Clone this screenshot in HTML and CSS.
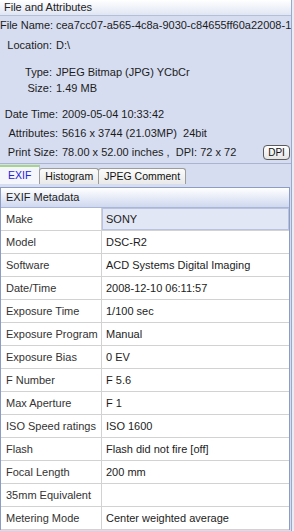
FILE: index.html
```html
<!DOCTYPE html>
<html lang="en">

<head>
    <meta charset="UTF-8">
    <meta name="viewport" content="width=device-width, initial-scale=1.0">
    <title>File and Attributes</title>
    <link rel="stylesheet" href="styles.css">
</head>

<body>
    <div class="window">
        <div class="title">File and Attributes</div>

        <div class="attrs attrs-top">
            <span class="lbl">File Name:</span>
            <span class="val nowrap">cea7cc07-a565-4c8a-9030-c84655ff60a22008-1</span>
            <span class="lbl">Location:</span>
            <span class="val">D:\</span>
            <span class="lbl">Type:</span>
            <span class="val">JPEG Bitmap (JPG) YCbCr</span>
            <span class="lbl">Size:</span>
            <span class="val">1.49 MB</span>
        </div>

        <div class="attrs attrs-bottom">
            <span class="lbl">Date Time:</span>
            <span class="val">2009-05-04 10:33:42</span>
            <span class="lbl">Attributes:</span>
            <span class="val">5616 x 3744 (21.03MP)&nbsp; 24bit</span>
            <span class="lbl">Print Size:</span>
            <span class="val print">
                <span>78.00 x 52.00 inches ,&nbsp; DPI: 72 x 72</span>
                <button class="dpi">DPI</button>
            </span>
        </div>

        <div class="tabs">
            <div class="tab active">EXIF</div>
            <div class="tab">Histogram</div>
            <div class="tab">JPEG Comment</div>
        </div>

        <div class="meta">
            <div class="meta-head">EXIF Metadata</div>
            <div class="row"><div class="k">Make</div><div class="v sel">SONY</div></div>
            <div class="row"><div class="k">Model</div><div class="v">DSC-R2</div></div>
            <div class="row"><div class="k">Software</div><div class="v">ACD Systems Digital Imaging</div></div>
            <div class="row"><div class="k">Date/Time</div><div class="v">2008-12-10 06:11:57</div></div>
            <div class="row"><div class="k">Exposure Time</div><div class="v">1/100 sec</div></div>
            <div class="row"><div class="k">Exposure Program</div><div class="v">Manual</div></div>
            <div class="row"><div class="k">Exposure Bias</div><div class="v">0 EV</div></div>
            <div class="row"><div class="k">F Number</div><div class="v">F 5.6</div></div>
            <div class="row"><div class="k">Max Aperture</div><div class="v">F 1</div></div>
            <div class="row"><div class="k">ISO Speed ratings</div><div class="v">ISO 1600</div></div>
            <div class="row"><div class="k">Flash</div><div class="v">Flash did not fire [off]</div></div>
            <div class="row"><div class="k">Focal Length</div><div class="v">200 mm</div></div>
            <div class="row"><div class="k">35mm Equivalent</div><div class="v"></div></div>
            <div class="row"><div class="k">Metering Mode</div><div class="v">Center weighted average</div></div>
        </div>
    </div>
</body>

</html>
```

FILE: styles.css
```css
body {
    margin: 0;
    width: 294px;
    height: 531px;
    overflow: hidden;
    background: #e8ecf6;
    font-family: "Liberation Sans", Arial, sans-serif;
    font-size: 11px;
    color: #1c1c1c;
}

.window {
    width: 291px;
    height: 531px;
    border-right: 1px solid #9ba8c8;
    background: #d6ddf0;
    overflow: hidden;
}

.title {
    height: 15px;
    line-height: 15px;
    padding-left: 4px;
    border-bottom: 1px solid #b4bfd9;
    background: linear-gradient(#ffffff, #e0e6f3);
    color: #222;
}

.attrs {
    display: grid;
    column-gap: 4px;
    line-height: 16px;
    align-items: start;
}

.attrs-top {
    padding-top: 1px;
    grid-template-columns: 52px 1fr;
    grid-template-rows: 20px 27px 16px 26px;
}

.attrs-bottom {
    grid-template-columns: 58px 1fr;
    grid-template-rows: 19px 19px 19px;
}

.lbl {
    text-align: right;
    white-space: nowrap;
}

.val {
    white-space: nowrap;
    overflow: hidden;
}

.print {
    display: flex;
    justify-content: space-between;
    align-items: center;
    overflow: visible;
}

.dpi {
    width: 27px;
    height: 15px;
    margin-right: 1px;
    padding: 0;
    border: 1px solid #5a5a5a;
    border-radius: 4px;
    background: linear-gradient(#ffffff, #e6e6e6);
    font-family: inherit;
    font-size: 10px;
    color: #111;
}

.tabs {
    display: flex;
    align-items: flex-end;
    height: 20px;
    border-top: 1px solid #a9b4d2;
}

.tab {
    height: 15px;
    line-height: 15px;
    padding: 0 5px;
    margin-right: -1px;
    border: 1px solid #9c9c9c;
    border-bottom: none;
    border-radius: 3px 3px 0 0;
    background: linear-gradient(#fbfbfb, #e9e9e9);
    font-size: 10.5px;
    color: #111;
}

.tab.active {
    height: 17px;
    line-height: 17px;
    padding: 0 8px;
    border-color: #b8c0d6;
    border-top: 2px solid #a6d48a;
    border-left: none;
    border-radius: 0;
    background: #f4f6fc;
    color: #2424d8;
}

.meta {
    margin-top: 3px;
    width: 288px;
    border: 1px solid #8d9cc2;
    border-bottom: none;
    background: #fff;
}

.meta-head {
    height: 19px;
    line-height: 19px;
    padding-left: 5px;
    border-bottom: 1px solid #aab6d6;
    background: linear-gradient(#ffffff, #cfd8ef);
}

.row {
    display: flex;
    height: 22px;
    line-height: 22px;
    border-bottom: 1px solid #d2d2d2;
}

.k {
    width: 95px;
    padding-left: 5px;
    border-right: 1px solid #d2d2d2;
    color: #333;
    white-space: nowrap;
}

.v {
    flex: 1;
    padding-left: 4px;
    white-space: nowrap;
}

.v.sel {
    background: #e2e7f5;
    outline: 1px solid #b7c3e0;
    outline-offset: -1px;
}
```
